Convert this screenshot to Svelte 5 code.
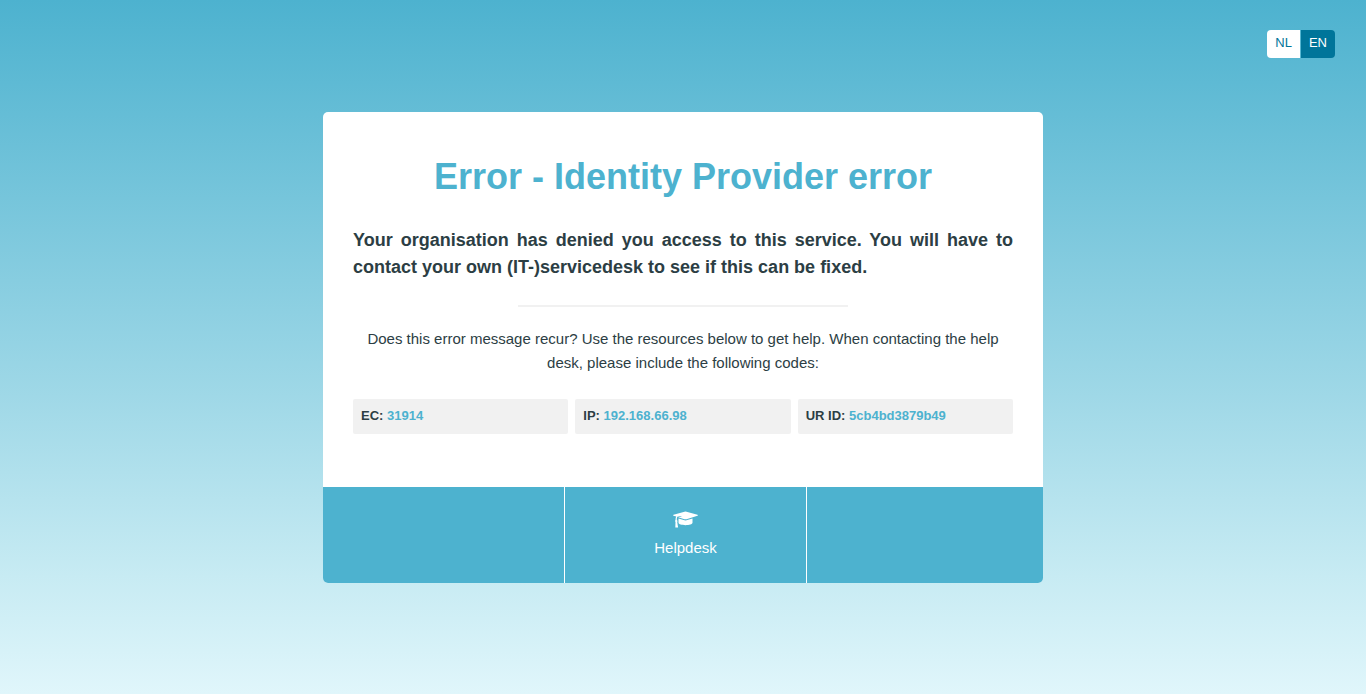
<script>
  const languages = ['NL', 'EN'];
  let current = $state('EN');
  const codes = [
    { label: 'EC:', value: '31914' },
    { label: 'IP:', value: '192.168.66.98' },
    { label: 'UR ID:', value: '5cb4bd3879b49' }
  ];
</script>

<div class="page">
  <header>
    <nav class="languages" aria-label="Language">
      {#each languages as language}
        <button class:active={current === language} onclick={() => (current = language)}>{language}</button>
      {/each}
    </nav>
  </header>

  <main class="card">
    <div class="content">
      <h1>Error - Identity Provider error</h1>
      <p class="lead">Your organisation has denied you access to this service. You will have to contact your own (IT-)servicedesk to see if this can be fixed.</p>
      <hr />
      <p class="help">Does this error message recur? Use the resources below to get help. When contacting the help desk, please include the following codes:</p>
      <ul class="codes">
        {#each codes as code}
          <li>{code.label} <span>{code.value}</span></li>
        {/each}
      </ul>
    </div>
    <footer>
      <div class="cell"></div>
      <div class="cell">
        <a href="#helpdesk">
          <svg viewBox="0 0 25 17" aria-hidden="true">
            <path d="M11.500 0.700Q12.500 0.400 13.500 0.700L24.500 3.700Q25.300 4.200 24.500 4.700L13.500 8.200Q12.500 8.500 11.500 8.200L5.200 6.300L8.500 5.400L8.300 5L4.300 5.700Q3.800 6.500 3.800 8.900Q5 9.800 4.200 11L5.100 16.500H2.300L2.500 11Q1.700 9.800 2.500 8.900Q2.500 6.600 3.200 5.400L0.500 4.700Q-0.300 4.200 0.500 3.700Z" />
            <path d="M5.500 7.400L11.500 9.300Q12.500 9.600 13.500 9.300L19.500 7.400V11.800C19.500 15 5.500 15 5.500 11.800Z" />
          </svg>
          Helpdesk
        </a>
      </div>
      <div class="cell"></div>
    </footer>
  </main>
</div>

<style>
  :global(body) {
    margin: 0;
  }

  .page {
    box-sizing: border-box;
    min-height: 100vh;
    padding: 30px 31px;
    background: linear-gradient(#4db2cf 0%, #9fd8e7 57%, #c7ebf3 83%, #e0f6fb 100%);
    color: #2c3e44;
    font: 15px/24px "Liberation Sans", Arial, sans-serif;
  }

  header {
    display: flex;
    justify-content: flex-end;
  }

  .languages {
    display: flex;
    gap: 1px;
    overflow: hidden;
    border-radius: 4px;
  }

  button {
    height: 28px;
    padding: 0 8px 2px;
    border: 0;
    background: #fff;
    color: #00759a;
    font: inherit;
    font-size: 13px;
    cursor: pointer;
  }

  button.active {
    background: #00759a;
    color: #fff;
  }

  .card {
    max-width: 720px;
    margin: 54px auto 0;
    overflow: hidden;
    border-radius: 5px;
    background: #fff;
  }

  .content {
    padding: 42px 30px 53px;
  }

  h1 {
    margin: 0 0 27px;
    color: #4db2cf;
    font-size: 36px;
    line-height: 46px;
    text-align: center;
  }

  .lead {
    margin: 0;
    font-size: 18px;
    font-weight: 700;
    line-height: 27px;
    text-align: justify;
  }

  hr {
    width: 50%;
    height: 2px;
    margin: 24px auto 20px;
    border: 0;
    background: #f1f1f1;
  }

  .help {
    margin: 0;
    text-align: center;
  }

  .codes {
    display: grid;
    grid-template-columns: repeat(3, 1fr);
    gap: 7px;
    margin: 24px 0 0;
    padding: 0;
    list-style: none;
  }

  .codes li {
    padding: 5px 8px 6px;
    border-radius: 2px;
    background: #f1f1f1;
    font-size: 13px;
    font-weight: 700;
  }

  .codes span {
    color: #4db2cf;
  }

  footer {
    display: flex;
    min-height: 96px;
    background: #4db2cf;
  }

  .cell {
    flex: 0 0 auto;
    box-sizing: border-box;
    width: 242px;
    border-right: 1px solid #fff;
  }

  .cell:last-child {
    flex: 1;
    width: auto;
    border-right: 0;
  }

  a {
    display: flex;
    flex-direction: column;
    align-items: center;
    gap: 8px;
    padding-top: 24px;
    color: #fff;
    text-decoration: none;
  }

  svg {
    width: 25px;
    height: 17px;
    fill: currentColor;
  }
</style>
